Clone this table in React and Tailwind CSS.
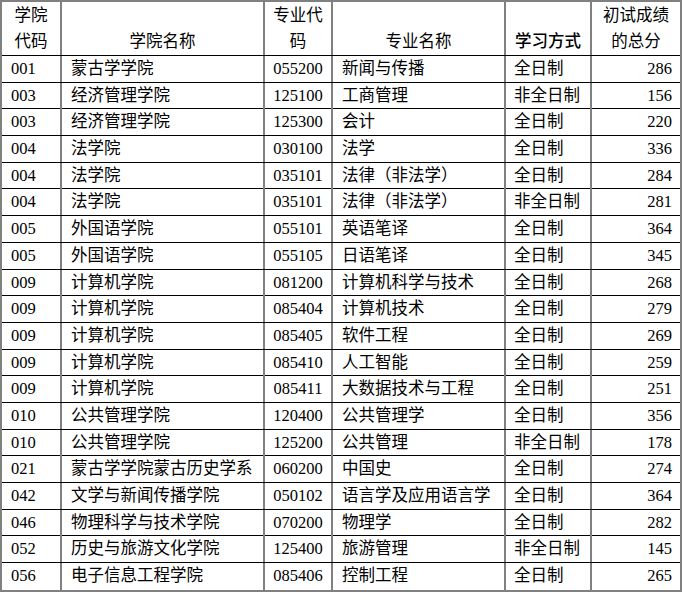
import React from "react";

const rows = [
  ["001", "蒙古学学院", "055200", "新闻与传播", "全日制", "286"],
  ["003", "经济管理学院", "125100", "工商管理", "非全日制", "156"],
  ["003", "经济管理学院", "125300", "会计", "全日制", "220"],
  ["004", "法学院", "030100", "法学", "全日制", "336"],
  ["004", "法学院", "035101", "法律（非法学）", "全日制", "284"],
  ["004", "法学院", "035101", "法律（非法学）", "非全日制", "281"],
  ["005", "外国语学院", "055101", "英语笔译", "全日制", "364"],
  ["005", "外国语学院", "055105", "日语笔译", "全日制", "345"],
  ["009", "计算机学院", "081200", "计算机科学与技术", "全日制", "268"],
  ["009", "计算机学院", "085404", "计算机技术", "全日制", "279"],
  ["009", "计算机学院", "085405", "软件工程", "全日制", "269"],
  ["009", "计算机学院", "085410", "人工智能", "全日制", "259"],
  ["009", "计算机学院", "085411", "大数据技术与工程", "全日制", "251"],
  ["010", "公共管理学院", "120400", "公共管理学", "全日制", "356"],
  ["010", "公共管理学院", "125200", "公共管理", "非全日制", "178"],
  ["021", "蒙古学学院蒙古历史学系", "060200", "中国史", "全日制", "274"],
  ["042", "文学与新闻传播学院", "050102", "语言学及应用语言学", "全日制", "364"],
  ["046", "物理科学与技术学院", "070200", "物理学", "全日制", "282"],
  ["052", "历史与旅游文化学院", "125400", "旅游管理", "非全日制", "145"],
  ["056", "电子信息工程学院", "085406", "控制工程", "全日制", "265"],
];

const grid = "grid grid-cols-[60px_203px_68px_173px_86px_88px]";
const vline = "border-r-2 border-[#808080]";

export default function App() {
  return (
    <div
      className="w-[682px] h-[594px] bg-white text-black text-[16.5px]"
      style={{ fontFamily: '"Liberation Serif", "Noto Sans CJK SC", serif' }}
    >
      <div className="w-[682px] border-2 border-[#808080]">
        <div className={`${grid} h-[54px] border-b border-black leading-[26px]`}>
          <div className={`${vline} flex items-end justify-center text-center`}>
            学院<br />代码
          </div>
          <div className={`${vline} flex items-end justify-center`}>学院名称</div>
          <div className={`${vline} flex items-end justify-center text-center`}>
            专业代<br />码
          </div>
          <div className={`${vline} flex items-end justify-center`}>专业名称</div>
          <div className={`${vline} flex items-end justify-center font-medium`}>学习方式</div>
          <div className="flex items-end justify-center text-center">
            初试成绩<br />的总分
          </div>
        </div>
        {rows.map((r, i) => (
          <div
            key={i}
            className={`${grid} h-[26.7px] leading-[26px] ${i < rows.length - 1 ? "border-b border-black" : ""}`}
          >
            <div className={`${vline} flex items-center pl-[9px] whitespace-nowrap`}>{r[0]}</div>
            <div className={`${vline} flex items-center pl-[9px] whitespace-nowrap`}>{r[1]}</div>
            <div className={`${vline} flex items-center justify-center whitespace-nowrap`}>{r[2]}</div>
            <div className={`${vline} flex items-center pl-[9px] whitespace-nowrap`}>{r[3]}</div>
            <div className={`${vline} flex items-center pl-[8px] whitespace-nowrap`}>{r[4]}</div>
            <div className="flex items-center justify-end pr-[8px] whitespace-nowrap">{r[5]}</div>
          </div>
        ))}
      </div>
    </div>
  );
}
